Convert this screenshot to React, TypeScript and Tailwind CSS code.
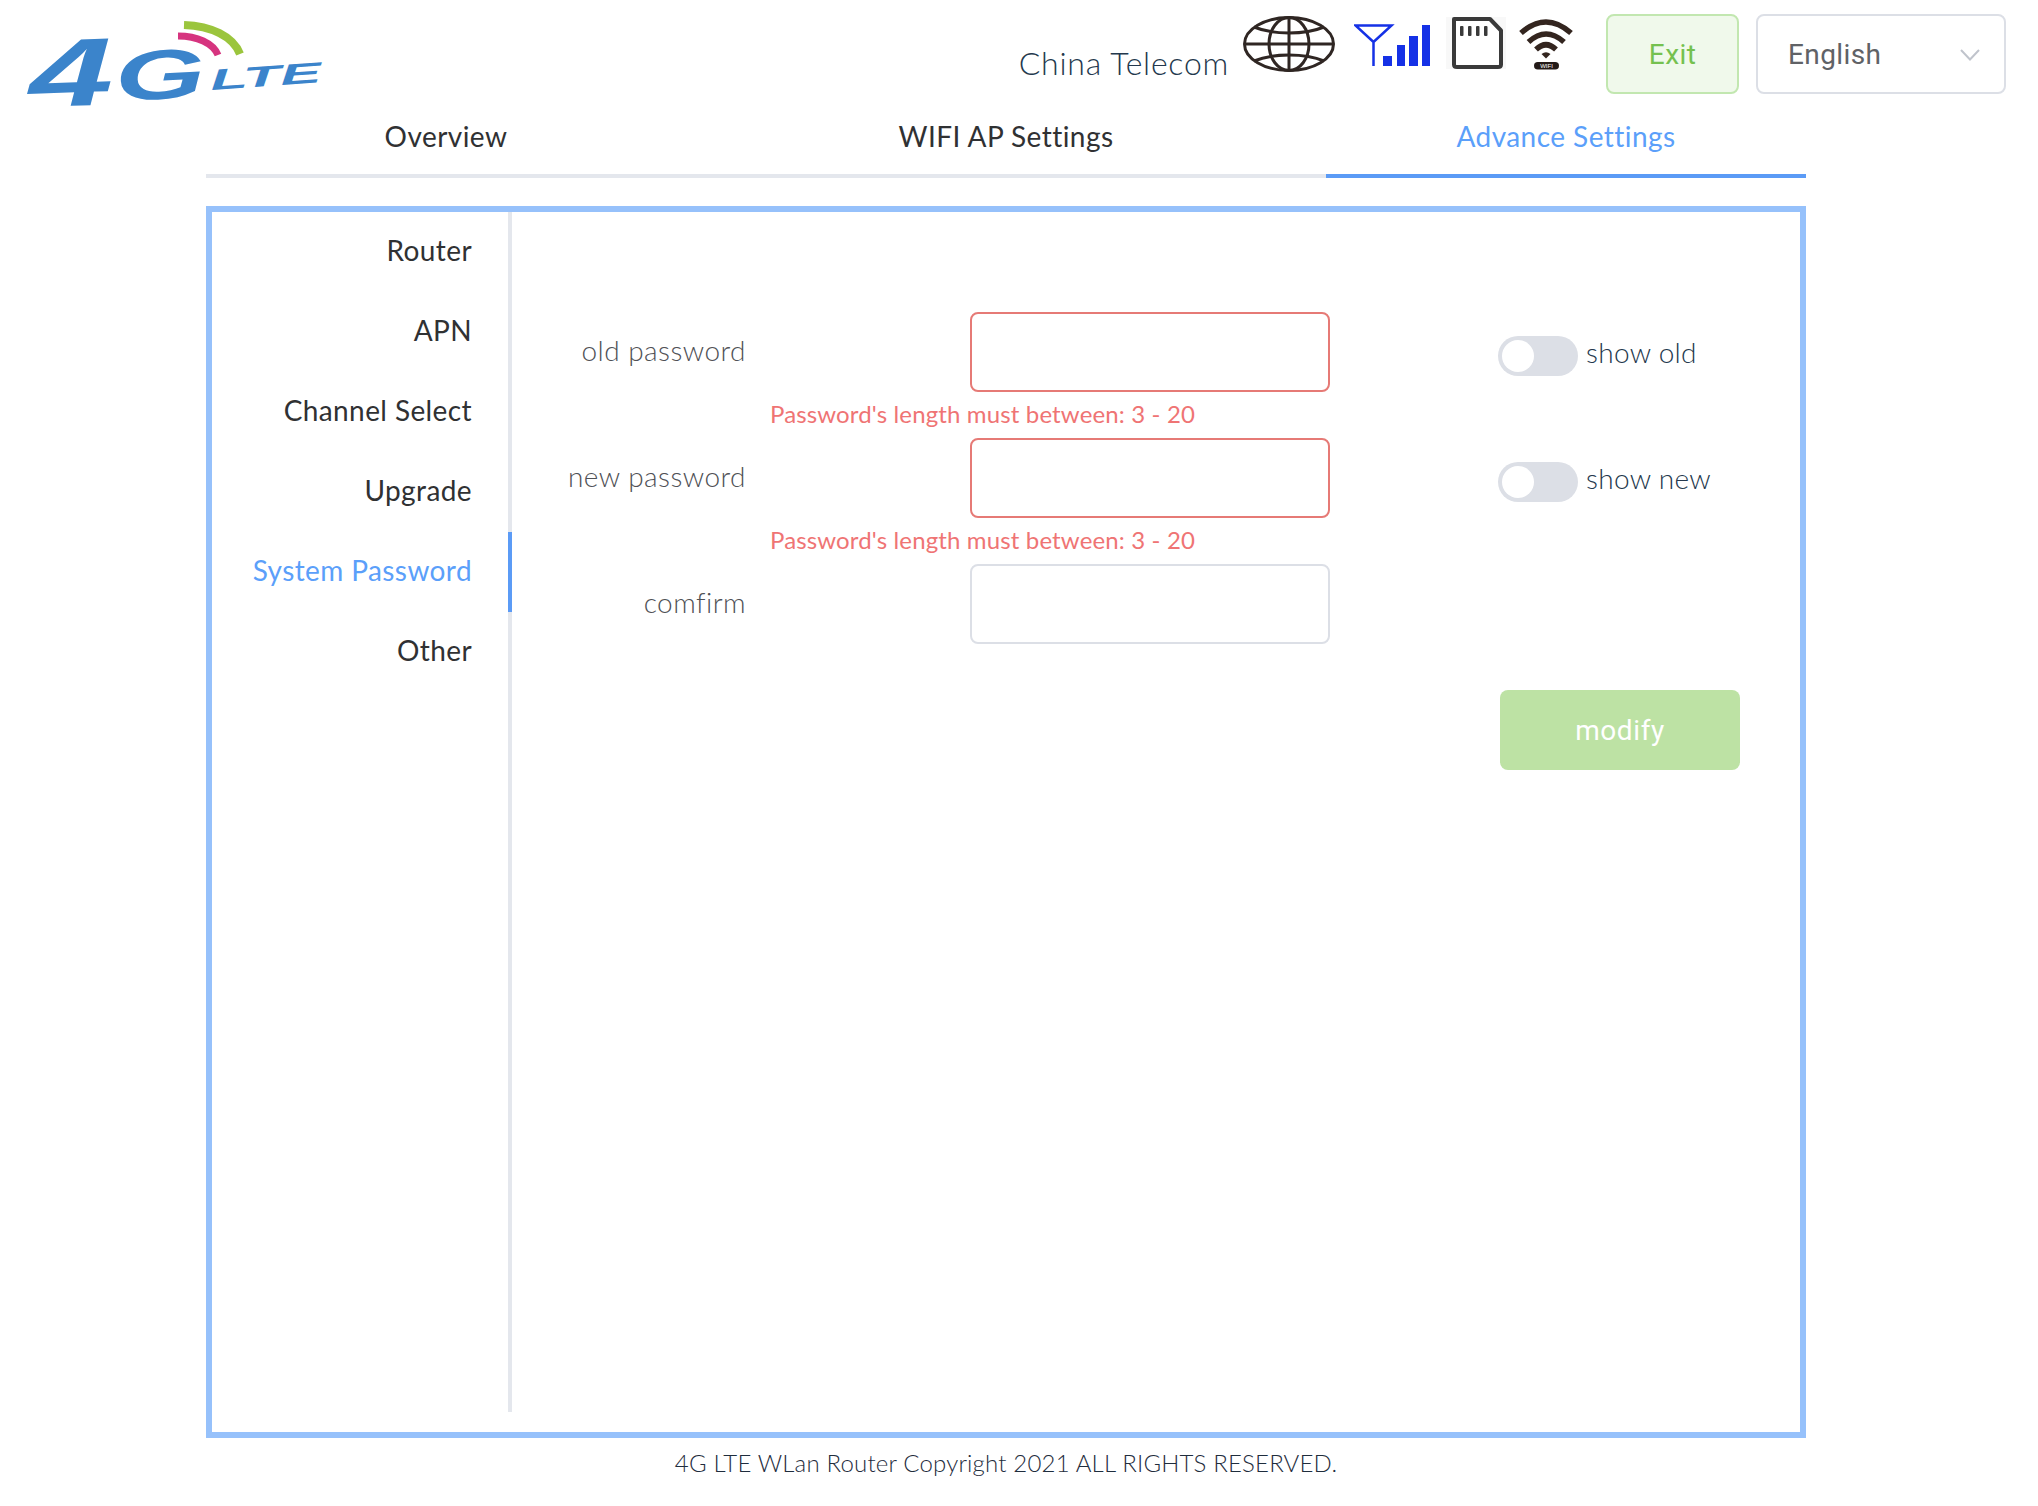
import { useState } from 'react';

const sideItems = ['Router', 'APN', 'Channel Select', 'Upgrade', 'System Password', 'Other'];
const errorText = "Password's length must between: 3 - 20";

function Logo() {
  return (
    <svg width="312" height="120" viewBox="-10 -10 312 120" className="block" aria-label="4G LTE">
      <g fill="#3b84cb" fontFamily="'Liberation Sans', sans-serif" fontWeight="700" fontStyle="italic">
        <text x="2" y="85" fontSize="96" textLength="84" lengthAdjust="spacingAndGlyphs" transform="rotate(-2 40 60)">4</text>
        <text x="88" y="78" fontSize="70" textLength="90" lengthAdjust="spacingAndGlyphs" transform="rotate(-3 130 55)">G</text>
        <text x="184" y="69" fontSize="29" textLength="111" lengthAdjust="spacingAndGlyphs" transform="rotate(-4 184 69)">LTE</text>
      </g>
      <path d="M151 15 C170 15 186 22 191 34" fill="none" stroke="#d6347f" strokeWidth="7" />
      <path d="M157 4 C184 5 206 15 213 33" fill="none" stroke="#9bc53d" strokeWidth="8" />
    </svg>
  );
}

function GlobeIcon() {
  return (
    <svg width="92" height="56" viewBox="0 0 92 56" fill="none" stroke="#2f2623" strokeWidth="3">
      <ellipse cx="46" cy="28" rx="44.5" ry="26.5" />
      <ellipse cx="46" cy="28" rx="20" ry="26.5" />
      <path d="M46 1.5V54.5M1.5 28H90.5" />
      <path d="M11 11C30 19 62 19 81 11M11 45C30 37 62 37 81 45" />
    </svg>
  );
}

function SignalIcon() {
  return (
    <svg width="78" height="43" viewBox="0 0 78 43">
      <path d="M1.5 1.5H37.5L19.5 18ZM19.5 18V42" fill="none" stroke="#1531e6" strokeWidth="2.5" />
      <g fill="#1531e6">
        <rect x="29" y="32" width="9" height="10" />
        <rect x="43" y="21" width="8" height="21" />
        <rect x="55" y="12" width="9" height="30" />
        <rect x="68" y="1" width="8" height="41" />
      </g>
    </svg>
  );
}

function SdIcon() {
  return (
    <svg width="60" height="52" viewBox="0 0 60 52" className="bg-[#f8f8f8]">
      <path
        d="M8 2H44L55 13.5V47.5Q55 50 52 50H11Q8 50 8 47.5Z"
        fill="#fff"
        stroke="#3a3a3a"
        strokeWidth="4"
        strokeLinejoin="round"
      />
      <g fill="#3a3a3a">
        <rect x="14" y="9" width="3.5" height="10" rx="1" />
        <rect x="22" y="9" width="3.5" height="10" rx="1" />
        <rect x="30" y="9" width="3.5" height="10" rx="1" />
        <rect x="38" y="9" width="3.5" height="10" rx="1" />
      </g>
    </svg>
  );
}

function WifiIcon() {
  return (
    <svg width="54" height="52" viewBox="0 0 54 52">
      <g fill="none" stroke="#33251f" strokeWidth="5.5">
        <path d="M2 15Q27 -7 52 15" />
        <path d="M9.5 24Q27 8 45 24" />
        <path d="M17 31.5Q27 22 37 31.5" />
      </g>
      <path d="M22.5 36Q27 32.5 31.5 36L27 40.5Z" fill="#33251f" />
      <rect x="15" y="44" width="25" height="7.5" rx="3.75" fill="#241b18" />
      <text x="27.5" y="50" textAnchor="middle" fontSize="6" fill="#fff" fontFamily="'Liberation Sans', sans-serif">
        WIFI
      </text>
    </svg>
  );
}

function Toggle({ label }: { label: string }) {
  const [on, setOn] = useState(false);
  return (
    <div className="flex items-center ml-[168px] h-[80px]">
      <button
        onClick={() => setOn(!on)}
        className={`w-[80px] h-[40px] rounded-full p-[4px] flex mt-[8px] ${on ? 'bg-[#5b9bf6] justify-end' : 'bg-[#dcdfe6] justify-start'}`}
      >
        <span className="w-[32px] h-[32px] rounded-full bg-white block" />
      </button>
      <span className="ml-[8px] text-[28px] tracking-[0.3px] text-[#24384d] font-light">{label}</span>
    </div>
  );
}

function Field({ label, error, toggle }: { label: string; error?: boolean; toggle?: string }) {
  return (
    <>
      <div className="flex items-center h-[80px]">
        <label className="w-[234px] pb-[4px] text-right text-[28px] tracking-[0.45px] text-[#4f5156] font-light">{label}</label>
        <input
          type="password"
          className={`ml-[224px] w-[360px] h-[80px] rounded-lg border-2 bg-white outline-none ${error ? 'border-[#e67a76]' : 'border-[#dcdfe6]'}`}
        />
        {toggle && <Toggle label={toggle} />}
      </div>
      <div className="h-[46px] pl-[258px] pb-[2px] flex items-center text-[24px] tracking-[0.14px] text-[#ef7474]">{error ? errorText : ''}</div>
    </>
  );
}

export default function App() {
  return (
    <div className="w-[2038px] h-[1506px] bg-white overflow-hidden font-['Lato',sans-serif]">
      {/* Header */}
      <div className="flex h-[100px]">
        <div className="pl-[17px] pt-[11px] h-[100px]">
          <Logo />
        </div>
        <div className="ml-auto flex items-start pr-[32px] pt-[14px]">
          <span className="text-[32px] tracking-[0.75px] font-light text-[#24384d] mt-[25px] mr-[14px]">China Telecom</span>
          <div className="mt-[2px] mr-[19px]"><GlobeIcon /></div>
          <div className="mt-[10px] mr-[14px]"><SignalIcon /></div>
          <div className="mt-[3px] mr-[13px]"><SdIcon /></div>
          <div className="mt-[4px] mr-[33px]"><WifiIcon /></div>
          <button className="w-[133px] h-[80px] pt-[2px] rounded-lg border-2 border-[#c2e7b0] bg-[#f0f9eb] text-[#75c14f] text-[28px] tracking-[0.4px] font-['Roboto',sans-serif] mr-[17px]">
            Exit
          </button>
          <div className="w-[250px] h-[80px] pt-[2px] rounded-lg border-2 border-[#dcdfe6] flex items-center justify-between pl-[30px] pr-[24px] text-[28px] tracking-[0.4px] text-[#606266] font-['Roboto',sans-serif]">
            English
            <svg width="20" height="12" viewBox="0 0 20 12" fill="none" stroke="#c0c4cc" strokeWidth="2">
              <path d="M1 1L10 10.5L19 1" />
            </svg>
          </div>
        </div>
      </div>

      {/* Tabs */}
      <div className="w-[1600px] ml-[206px] flex h-[78px] text-[28px] tracking-[0.45px]">
        <div className="w-[480px] pb-[3px] flex items-center justify-center border-b-4 border-[#e4e7ed] text-[#303133]">Overview</div>
        <div className="w-[640px] pb-[3px] flex items-center justify-center border-b-4 border-[#e4e7ed] text-[#303133]">WIFI AP Settings</div>
        <div className="w-[480px] pb-[3px] flex items-center justify-center border-b-4 border-[#5b9bf6] text-[#5b9ffa]">Advance Settings</div>
      </div>

      {/* Panel */}
      <div className="w-[1600px] h-[1232px] ml-[206px] mt-[28px] border-[6px] border-[#96c1fb] flex items-start">
        <div className="w-[300px] h-[1200px] border-r-4 border-[#e4e7ed]">
          {sideItems.map((item) => {
            const active = item === 'System Password';
            return (
              <div
                key={item}
                className={`relative h-[80px] pb-[4px] flex items-center justify-end pr-[36px] text-[28px] tracking-[0.4px] ${active ? 'text-[#5b9ffa]' : 'text-[#303133]'}`}
              >
                {item}
                {active && <span className="absolute right-[-4px] top-0 w-[4px] h-[80px] bg-[#5b9bf6]" />}
              </div>
            );
          })}
        </div>
        <div className="pt-[100px]">
          <Field label="old password" error toggle="show old" />
          <Field label="new password" error toggle="show new" />
          <Field label="comfirm" />
          <button className="ml-[988px] w-[240px] h-[80px] pt-[2px] rounded-lg bg-[#bde2a4] text-white text-[28px] tracking-[0.6px] font-['Roboto',sans-serif]">
            modify
          </button>
        </div>
      </div>

      <div className="w-[1600px] ml-[206px] text-center text-[24px] tracking-[0.18px] text-[#1f2d3d] font-light mt-[7px]">
        4G LTE WLan Router Copyright 2021 ALL RIGHTS RESERVED.
      </div>
    </div>
  );
}
